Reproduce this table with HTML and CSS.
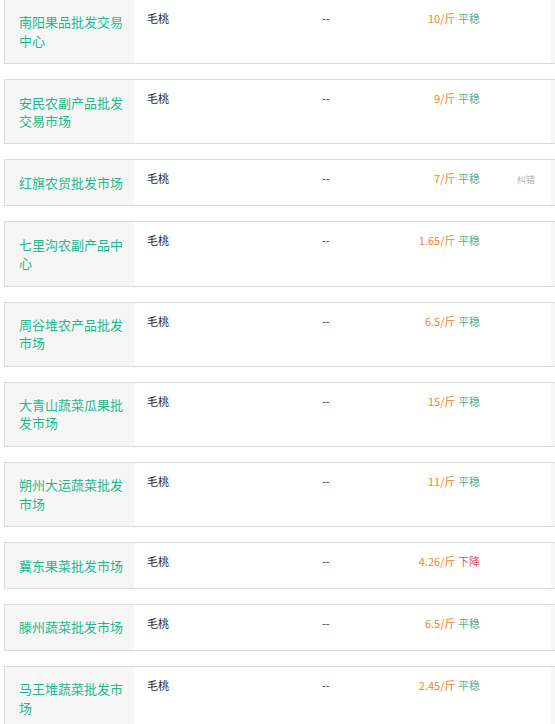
FILE: index.html
```html
<!DOCTYPE html>
<html lang="zh-CN">
<head>
<meta charset="utf-8">
<title>行情</title>
<link rel="stylesheet" href="styles.css">
</head>
<body>
<div class="page">
  <div class="list">
    <div class="row">
      <div class="market">南阳果品批发交易中心</div>
      <div class="cell product">毛桃</div>
      <div class="cell spec">--</div>
      <div class="cell price"><span class="num">10/斤</span> <span class="flat">平稳</span></div>
      <div class="cell act"></div>
      <div class="tail"></div>
    </div>
    <div class="row">
      <div class="market">安民农副产品批发交易市场</div>
      <div class="cell product">毛桃</div>
      <div class="cell spec">--</div>
      <div class="cell price"><span class="num">9/斤</span> <span class="flat">平稳</span></div>
      <div class="cell act"></div>
      <div class="tail"></div>
    </div>
    <div class="row">
      <div class="market">红旗农贸批发市场</div>
      <div class="cell product">毛桃</div>
      <div class="cell spec">--</div>
      <div class="cell price"><span class="num">7/斤</span> <span class="flat">平稳</span></div>
      <div class="cell act"><span class="fix">纠错</span></div>
      <div class="tail"></div>
    </div>
    <div class="row">
      <div class="market">七里沟农副产品中心</div>
      <div class="cell product">毛桃</div>
      <div class="cell spec">--</div>
      <div class="cell price"><span class="num">1.65/斤</span> <span class="flat">平稳</span></div>
      <div class="cell act"></div>
      <div class="tail"></div>
    </div>
    <div class="row">
      <div class="market">周谷堆农产品批发市场</div>
      <div class="cell product">毛桃</div>
      <div class="cell spec">--</div>
      <div class="cell price"><span class="num">6.5/斤</span> <span class="flat">平稳</span></div>
      <div class="cell act"></div>
      <div class="tail"></div>
    </div>
    <div class="row">
      <div class="market">大青山蔬菜瓜果批发市场</div>
      <div class="cell product">毛桃</div>
      <div class="cell spec">--</div>
      <div class="cell price"><span class="num">15/斤</span> <span class="flat">平稳</span></div>
      <div class="cell act"></div>
      <div class="tail"></div>
    </div>
    <div class="row">
      <div class="market">朔州大运蔬菜批发市场</div>
      <div class="cell product">毛桃</div>
      <div class="cell spec">--</div>
      <div class="cell price"><span class="num">11/斤</span> <span class="flat">平稳</span></div>
      <div class="cell act"></div>
      <div class="tail"></div>
    </div>
    <div class="row">
      <div class="market">冀东果菜批发市场</div>
      <div class="cell product">毛桃</div>
      <div class="cell spec">--</div>
      <div class="cell price"><span class="num">4.26/斤</span> <span class="down">下降</span></div>
      <div class="cell act"></div>
      <div class="tail"></div>
    </div>
    <div class="row">
      <div class="market">滕州蔬菜批发市场</div>
      <div class="cell product">毛桃</div>
      <div class="cell spec">--</div>
      <div class="cell price"><span class="num">6.5/斤</span> <span class="flat">平稳</span></div>
      <div class="cell act"></div>
      <div class="tail"></div>
    </div>
    <div class="row">
      <div class="market">马王堆蔬菜批发市场</div>
      <div class="cell product">毛桃</div>
      <div class="cell spec">--</div>
      <div class="cell price"><span class="num">2.45/斤</span> <span class="flat">平稳</span></div>
      <div class="cell act"></div>
      <div class="tail"></div>
    </div>
  </div>
</div>
</body>
</html>
```
FILE: styles.css
```css
html, body {
  margin: 0;
  padding: 0;
  background: #fff;
}

body {
  font-family: "Noto Sans CJK SC", "Noto Sans", sans-serif;
  overflow: hidden;
}

.page {
  width: 555px;
  overflow: hidden;
  padding-left: 4px;
  box-sizing: border-box;
}

.list {
  margin-top: -1px;
  display: flex;
  flex-direction: column;
  gap: 15px;
}

.row {
  display: grid;
  grid-template-columns: 129px 174px 90px 84px 69px 40px;
  width: 586px;
  border-top: 1px solid #dcdcdc;
  border-bottom: 1px solid #dcdcdc;
  border-left: 1px solid #dcdcdc;
}

.market {
  background: #f6f6f6;
  color: #1db98e;
  font-size: 13px;
  line-height: 18.2px;
  padding: 13.4px 8px 13.4px 14px;
}

.cell {
  font-size: 11px;
  line-height: 17px;
  padding-top: 10px;
  color: #333;
  white-space: nowrap;
}

.product {
  padding-left: 13px;
  color: #2a2a2a;
}

.spec {
  padding-left: 14px;
}

.price {
  text-align: right;
  padding-right: 2px;
}

.num {
  color: #f5812f;
}

.flat {
  color: #62ad90;
}

.down {
  color: #e05a5e;
}

.act {
  padding-left: 35px;
}

.fix {
  font-size: 9px;
  color: #b0b0b0;
}

.tail {
  background: #f6f6f6;
}
```
